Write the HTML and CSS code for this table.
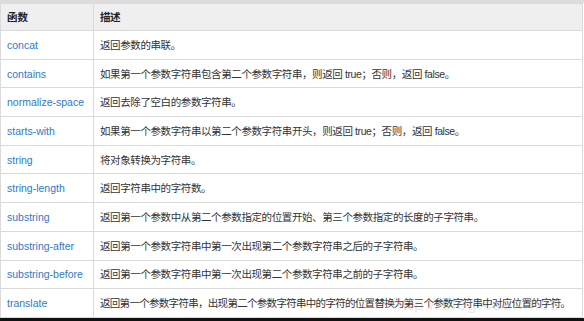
FILE: index.html
```html
<!DOCTYPE html>
<html lang="zh">
<head>
<meta charset="utf-8">
<link rel="stylesheet" href="styles.css">
</head>
<body>
<div class="frame">
<table class="fn-table">
  <thead>
    <tr><th class="c1">函数</th><th class="desc">描述</th></tr>
  </thead>
  <tbody>
    <tr><td class="c1"><a>concat</a></td><td class="desc">返回参数的串联。</td></tr>
    <tr><td class="c1"><a>contains</a></td><td class="desc">如果第一个参数字符串包含第二个参数字符串，则返回 true；否则，返回 false。</td></tr>
    <tr><td class="c1"><a>normalize-space</a></td><td class="desc">返回去除了空白的参数字符串。</td></tr>
    <tr><td class="c1"><a>starts-with</a></td><td class="desc">如果第一个参数字符串以第二个参数字符串开头，则返回 true；否则，返回 false。</td></tr>
    <tr><td class="c1"><a>string</a></td><td class="desc">将对象转换为字符串。</td></tr>
    <tr><td class="c1"><a>string-length</a></td><td class="desc">返回字符串中的字符数。</td></tr>
    <tr><td class="c1"><a>substring</a></td><td class="desc">返回第一个参数中从第二个参数指定的位置开始、第三个参数指定的长度的子字符串。</td></tr>
    <tr><td class="c1"><a>substring-after</a></td><td class="desc">返回第一个参数字符串中第一次出现第二个参数字符串之后的子字符串。</td></tr>
    <tr><td class="c1"><a>substring-before</a></td><td class="desc">返回第一个参数字符串中第一次出现第二个参数字符串之前的子字符串。</td></tr>
    <tr><td class="c1"><a>translate</a></td><td class="desc tight">返回第一个参数字符串，出现第二个参数字符串中的字符的位置替换为第三个参数字符串中对应位置的字符。</td></tr>
  </tbody>
</table>
<div class="watermark">http://blog.csdn.net/</div>
</div>
<div class="bottom-bar"></div>
</body>
</html>
```

FILE: styles.css
```css
html, body {
  margin: 0;
  padding: 0;
  background: #ffffff;
}
body {
  position: relative;
  width: 584px;
  height: 321px;
  overflow: hidden;
  font-family: "Liberation Sans", "Noto Sans CJK SC", sans-serif;
  font-size: 10.5px;
  color: #333333;
}
.frame {
  position: relative;
  border-top: 3px solid #dcdcdc;
}
.fn-table {
  width: 583px;
  border-collapse: collapse;
  table-layout: fixed;
}
.fn-table th,
.fn-table td {
  border: 1px solid #dadada;
  padding: 0 0 0 6px;
  text-align: left;
  white-space: nowrap;
  overflow: hidden;
  line-height: 14px;
}
.fn-table .desc {
  letter-spacing: -0.4px;
}
.fn-table .tight {
  letter-spacing: -0.7px;
}
.fn-table th {
  background: #efefef;
  font-weight: 700;
  color: #222222;
}
.fn-table thead tr {
  height: 27px;
}
.fn-table tbody tr {
  height: 28.7px;
}
.fn-table .c1 {
  width: 86px;
}
.fn-table a {
  color: #2f79c9;
  text-decoration: none;
}
.watermark {
  position: absolute;
  left: 392px;
  top: 292px;
  font-family: "Liberation Sans", sans-serif;
  font-size: 17px;
  line-height: 20px;
  color: rgba(170, 170, 170, 0.28);
  letter-spacing: 1px;
}
.bottom-bar {
  height: 3px;
  background: #111111;
  position: absolute;
  left: 0;
  right: 0;
  top: 318px;
}
```
